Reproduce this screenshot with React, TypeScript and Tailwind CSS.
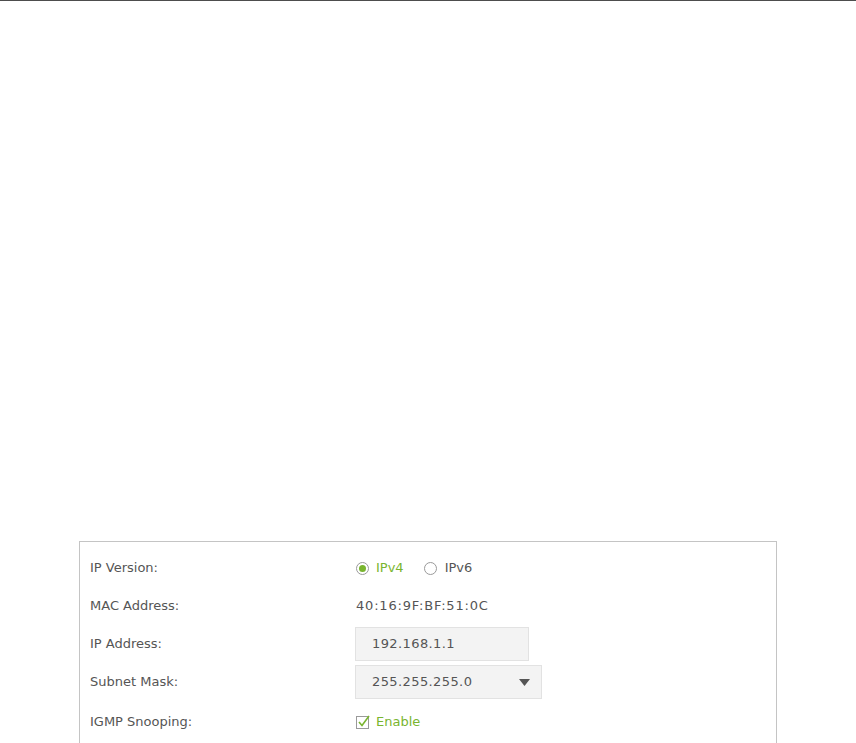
import React from 'react';

const rows = ['IP Version:', 'MAC Address:', 'IP Address:', 'Subnet Mask:', 'IGMP Snooping:'];

function Radio({ checked }: { checked?: boolean }) {
  return (
    <span className="flex h-[13px] w-[13px] items-center justify-center rounded-full border border-[#9a9a9a] bg-white">
      {checked && <span className="h-[7px] w-[7px] rounded-full bg-[#79b52f]" />}
    </span>
  );
}

export default function App() {
  return (
    <div className="min-h-[743px] w-[856px] bg-white font-['DejaVu_Sans',sans-serif] text-[13px] text-[#555]">
      <div className="h-px bg-[#4d4d4d]" />
      <div className="pt-[540px] pl-[79px]">
        <div className="w-[698px] border border-[#c4c4c4] px-[10px] pt-[7px] pb-[10px]">
          <div className="flex">
            <div className="w-[265px] flex flex-col">
              {rows.map((r, i) => (
                <div
                  key={r}
                  className={i === 4 ? 'flex h-[42px] items-center' : 'flex h-[38px] items-center'}
                >
                  {r}
                </div>
              ))}
            </div>
            <div className="flex flex-col">
              <div className="flex h-[38px] items-center pl-px">
                <Radio checked />
                <span className="ml-[7px] text-[#79b52f]">IPv4</span>
                <span className="ml-[20px]">
                  <Radio />
                </span>
                <span className="ml-[8px]">IPv6</span>
              </div>
              <div className="flex h-[38px] items-center pl-px tracking-[0.8px]">40:16:9F:BF:51:0C</div>
              <div className="flex h-[38px] items-center">
                <div className="flex h-[34px] w-[174px] items-center border border-[#e2e2e2] bg-[#f3f3f3] pl-[16px] tracking-[0.4px]">
                  192.168.1.1
                </div>
              </div>
              <div className="flex h-[38px] items-center">
                <div className="flex h-[34px] w-[187px] items-center justify-between border border-[#e2e2e2] bg-[#f3f3f3] pl-[16px] pr-[11px]">
                  <span className="tracking-[0.4px]">255.255.255.0</span>
                  <svg width="11" height="7" viewBox="0 0 11 7">
                    <path d="M0 0h11L5.5 7z" fill="#555" />
                  </svg>
                </div>
              </div>
              <div className="flex h-[42px] items-center pl-px">
                <svg width="14" height="14" viewBox="0 0 14 14">
                  <rect x="0.5" y="1.5" width="12" height="12" fill="white" stroke="#9a9a9a" />
                  <path d="M3 7l3 3.5L13 1" fill="none" stroke="#79b52f" strokeWidth="1.6" />
                </svg>
                <span className="ml-[6px] text-[#79b52f]">Enable</span>
              </div>
            </div>
          </div>
        </div>
      </div>
    </div>
  );
}
